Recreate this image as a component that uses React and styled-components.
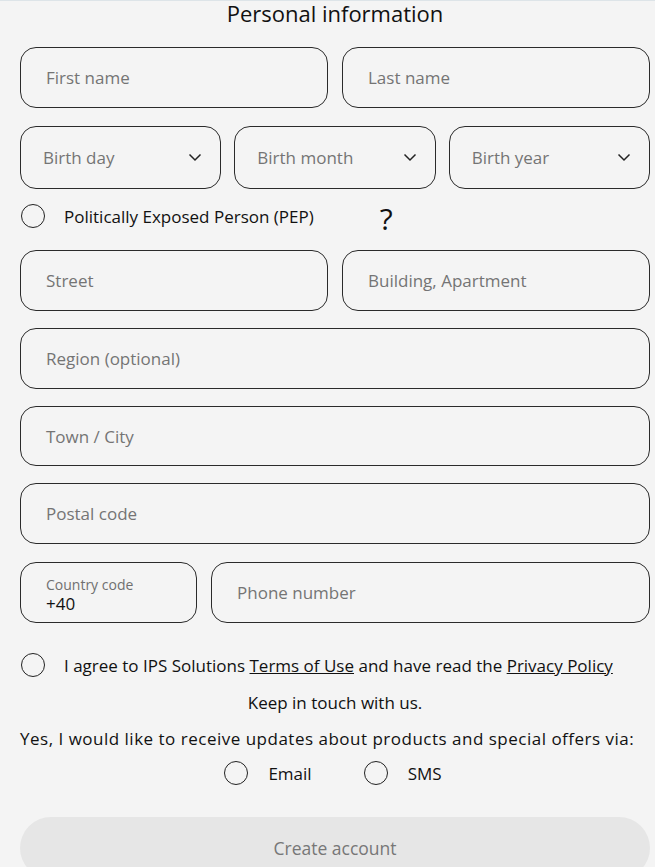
import React from "react"
import styled, {createGlobalStyle} from "styled-components"

const Global = createGlobalStyle`
  html, body {
    margin: 0;
    background: #f4f4f4;
    font-family: "Open Sans", "Liberation Sans", sans-serif;
    color: #111;
  }
  body { border-top: 1px solid #dde4e8; }
`

const Form = styled.form`
  width: 630px;
  padding: 0 5px 0 20px;
  display: flex;
  flex-direction: column;
`

const Title = styled.h2`
  margin: 0;
  font-weight: 400;
  font-size: 22px;
  line-height: 25px;
  text-align: center;
  margin-bottom: 21px;
`

const Row = styled.div`
  display: grid;
  grid-template-columns: ${p => p.$cols || "1fr"};
  gap: ${p => p.$gap || 14}px;
  margin-bottom: ${p => p.$mb ?? 17}px;
`

const Field = styled.div`
  height: ${p => p.$h || 61}px;
  box-sizing: border-box;
  border: 1px solid #2b2b2b;
  border-radius: 16px;
  display: flex;
  align-items: center;
  justify-content: space-between;
  padding: 0 18px 0 ${p => p.$pl || 25}px;
  font-size: 17px;
  color: #747474;
`

const Stack = styled.div`
  display: flex;
  flex-direction: column;
  line-height: 19px;
  padding-top: 2px;
  small { font-size: 14px; color: #707070; }
  span { font-size: 17px; color: #111; }
`

const Chevron = () => (
  <svg width="14" height="9" viewBox="0 0 14 9" fill="none" stroke="#222" strokeWidth="1.5">
    <path d="M1.5 1.5 L7 7 L12.5 1.5" />
  </svg>
)

const Check = styled.label`
  display: flex;
  align-items: center;
  font-size: 17px;
  line-height: 23px;
  color: #111;
  gap: ${p => p.$gap || 20}px;
  margin: ${p => p.$m || "0"};
  a { color: #111; text-decoration: underline; }
`

const Circle = styled.span`
  width: 24px;
  height: 24px;
  box-sizing: border-box;
  border: 1.5px solid #222;
  border-radius: 50%;
  flex: none;
`

const Help = styled.span`
  font-size: 30px;
  font-weight: 500;
  margin-left: 47px;
  line-height: 20px;
  position: relative;
  top: 3px;
`

const Center = styled.p`
  margin: 0;
  text-align: ${p => p.$align || "center"};
  font-size: 17px;
  letter-spacing: ${p => p.$ls || 0}px;
  line-height: 20px;
  margin-bottom: ${p => p.$mb || 0}px;
`

const Options = styled.div`
  display: flex;
  justify-content: center;
  gap: 52px;
  margin-bottom: 32px;
  padding-right: 4px;
`

const Submit = styled.button`
  height: 62px;
  border: none;
  border-radius: 31px;
  background: #e6e6e6;
  color: #777;
  font-family: inherit;
  font-size: 17.5px;
`

export default function App() {
  return (
    <>
      <Global />
      <Form>
        <Title>Personal information</Title>
        <Row $cols="1fr 1fr" $mb={18}>
          <Field>First name</Field>
          <Field>Last name</Field>
        </Row>
        <Row $cols="1fr 1fr 1fr" $gap={13} $mb={11}>
          <Field $h={63} $pl={22}>Birth day <Chevron /></Field>
          <Field $h={63} $pl={22}>Birth month <Chevron /></Field>
          <Field $h={63} $pl={22}>Birth year <Chevron /></Field>
        </Row>
        <Check $gap={19} $m="4px 0 22px 1px">
          <Circle />
          Politically Exposed Person (PEP)
          <Help>?</Help>
        </Check>
        <Row $cols="1fr 1fr">
          <Field>Street</Field>
          <Field>Building, Apartment</Field>
        </Row>
        <Row><Field>Region (optional)</Field></Row>
        <Row><Field $h={60}>Town / City</Field></Row>
        <Row $mb={18}><Field>Postal code</Field></Row>
        <Row $cols="177px 1fr" $mb={30}>
          <Field $pl={25}>
            <Stack>
              <small>Country code</small>
              <span>+40</span>
            </Stack>
          </Field>
          <Field>Phone number</Field>
        </Row>
        <Check $gap={19} $m="0 0 16px 1px">
          <Circle />
          <span>I agree to IPS Solutions <a>Terms of Use</a> and have read the <a>Privacy Policy</a></span>
        </Check>
        <Center $mb={16}>Keep in touch with us.</Center>
        <Center $align="left" $ls={0.5} $mb={12}>Yes, I would like to receive updates about products and special offers via:</Center>
        <Options>
          <Check><Circle />Email</Check>
          <Check><Circle />SMS</Check>
        </Options>
        <Submit type="button">Create account</Submit>
      </Form>
    </>
  )
}
